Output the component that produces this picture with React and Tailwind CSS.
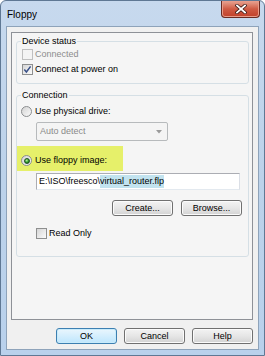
import React from "react";

const font = { fontFamily: '"Liberation Sans", Arial, sans-serif' };

const CheckBox = ({ checked, disabled }) => (
  <span
    className={`w-[11px] h-[11px] border flex items-center justify-center shrink-0 ${
      disabled
        ? "border-[#c0c0c0] bg-[#f4f4f4]"
        : "border-[#8e8f8f] bg-linear-to-br from-[#d6d6d6] to-[#fbfbfb]"
    }`}
  >
    {checked && (
      <svg width="9" height="9" viewBox="0 0 9 9">
        <path d="M1.3 4.6 L3.4 7 L7.6 1.4" fill="none" stroke="#3a5188" strokeWidth="1.5" />
      </svg>
    )}
  </span>
);

const Radio = ({ checked }) => (
  <span className="w-[11px] h-[11px] rounded-full border border-[#8b8d8f] bg-linear-to-br from-[#d3d3d3] to-[#fbfbfb] flex items-center justify-center shrink-0">
    {checked && (
      <span className="w-[6px] h-[6px] rounded-full border border-[#1f4f1f] bg-[radial-gradient(circle_at_40%_35%,#b6f59a,#2f9a2a_55%,#165f16)]" />
    )}
  </span>
);

const Button = ({ children, primary }) => (
  <button
    className={`w-[61px] h-[16px] rounded-[3px] border text-[9px] leading-none text-black flex items-center justify-center ${
      primary
        ? "border-[#3c7fb1] bg-linear-to-b from-[#eaf6fd] to-[#bee6fd] shadow-[inset_0_0_0_1px_#c8ebfb]"
        : "border-[#707070] bg-linear-to-b from-[#f3f3f3] via-[#e6e6e6] to-[#d3d3d3] shadow-[inset_0_0_0_1px_#fbfbfb]"
    }`}
  >
    {children}
  </button>
);

export default function App() {
  return (
    <div
      style={font}
      className="w-[265px] h-[356px] flex flex-col border border-[#5f7894] rounded-t-[6px] bg-linear-to-b from-[#c7d9ee] via-[#bcd2ea] to-[#b9d1ec] overflow-hidden"
    >
      {/* Title bar */}
      <div className="h-[25px] flex items-start justify-between shrink-0">
        <span className="pl-[6px] pt-[9px] text-[10px] leading-none text-black">Floppy</span>
        <div className="mr-[4px] w-[39px] h-[17px] rounded-b-[4px] border border-t-0 border-[#6a2b22] bg-linear-to-b from-[#e7a493] via-[#cf5a43] to-[#c1412a] flex items-center justify-center shadow-[inset_0_0_0_1px_#e89c8a]">
          <svg width="12" height="10" viewBox="0 0 12 10">
            <path d="M2 1.5 L10 8.5 M10 1.5 L2 8.5" stroke="#3b1a16" strokeWidth="3.4" strokeLinecap="square" />
            <path d="M2 1.5 L10 8.5 M10 1.5 L2 8.5" stroke="#ffffff" strokeWidth="1.8" strokeLinecap="square" />
          </svg>
        </div>
      </div>

      {/* Client area */}
      <div className="mx-[5px] h-[324px] border border-[#8ea3ba] bg-[#f0f0f0] flex flex-col">
        <div className="ml-[4px] mr-[5px] mt-[5px] h-[288px] border border-[#8e9197] bg-[#f5f5f5] flex flex-col pt-[3px] pl-[4px] pr-[3px]">
          {/* Device status */}
          <fieldset className="border border-[#d5dfe5] rounded-[3px] pl-[4px] pb-[6px]">
            <legend className="px-[1px] text-[9px] leading-[11px] text-black">Device status</legend>
            <div className="pl-[1px] flex flex-col">
              <div className="h-[15px] flex items-center gap-[2px]">
                <CheckBox disabled />
                <span className="text-[9px] text-[#8d8d8d]">Connected</span>
              </div>
              <div className="h-[15px] flex items-center gap-[2px]">
                <CheckBox checked />
                <span className="text-[9px] text-black">Connect at power on</span>
              </div>
            </div>
          </fieldset>

          {/* Connection */}
          <fieldset className="mt-[6px] border border-[#d5dfe5] rounded-[3px] pl-[4px] pb-[15px]">
            <legend className="px-[1px] text-[9px] leading-[11px] text-black">Connection</legend>
            <div className="pt-[3px] flex flex-col">
              <div className="h-[15px] flex items-center gap-[3px]">
                <Radio />
                <span className="text-[9px] text-black">Use physical drive:</span>
              </div>
              <div className="ml-[15px] mt-[3px] w-[132px] h-[19px] rounded-[2px] border border-[#b7babc] bg-[#f4f4f4] flex items-center justify-between pl-[3px] pr-[5px]">
                <span className="text-[9px] text-[#8a8a8a]">Auto detect</span>
                <svg width="6" height="4" viewBox="0 0 6 4">
                  <path d="M0 0 L6 0 L3 3.5 Z" fill="#9a9a9a" />
                </svg>
              </div>
              <div className="-ml-[4px] mt-[5px] w-[106px] h-[25px] bg-[#e6f06a] flex items-end pl-[4px] pb-[3px]">
                <div className="h-[15px] flex items-center gap-[3px]">
                  <Radio checked />
                  <span className="text-[9px] text-black">Use floppy image:</span>
                </div>
              </div>
              <div className="ml-[15px] mt-[2px] w-[204px] h-[17px] border border-[#abadb3] border-b-[#e3e9ef] border-r-[#dbdfe6] bg-white flex items-center pl-[2px]">
                <span className="text-[9px] text-black">E:\ISO\freesco\</span>
                <span className="text-[9px] text-black bg-[#c2e3ef]">virtual_router.flp</span>
              </div>
              <div className="mt-[10px] flex justify-end gap-[8px] pr-[6px]">
                <Button>Create...</Button>
                <Button>Browse...</Button>
              </div>
              <div className="ml-[15px] mt-[10px] h-[15px] flex items-center gap-[2px]">
                <CheckBox />
                <span className="text-[9px] text-black">Read Only</span>
              </div>
            </div>
          </fieldset>
        </div>

        {/* Dialog buttons */}
        <div className="mt-[8px] flex justify-end gap-[7px] pr-[5px]">
          <Button primary>OK</Button>
          <Button>Cancel</Button>
          <Button>Help</Button>
        </div>
      </div>
    </div>
  );
}
